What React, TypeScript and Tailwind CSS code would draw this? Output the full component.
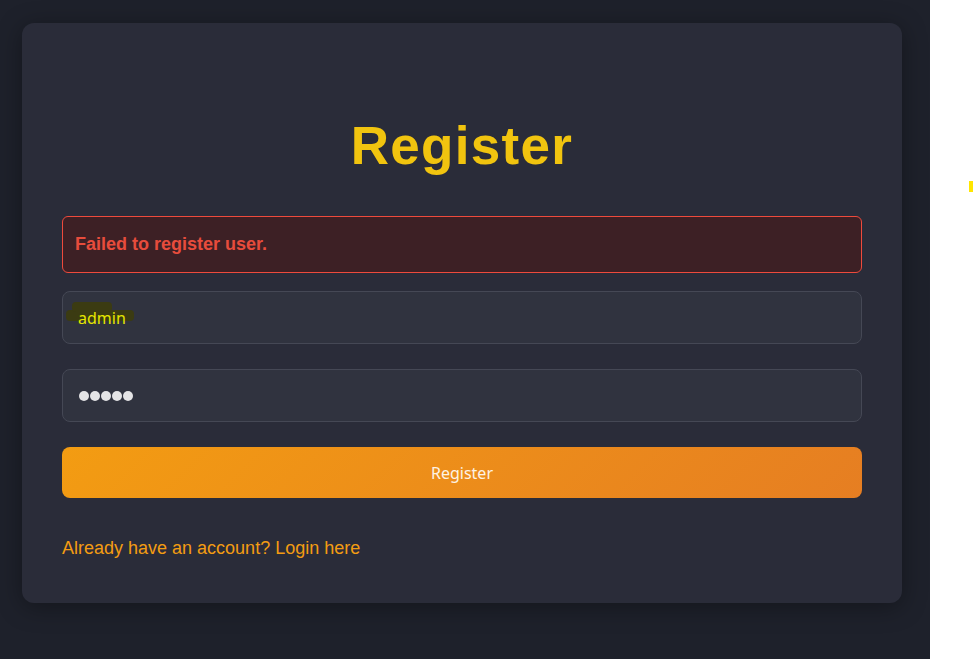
import React from 'react';

export default function App() {
  return (
    <div className="flex min-h-[659px] w-full">
      <div className="w-[930px] shrink-0 bg-[#1e212b] pl-[22px] pt-[23px] pb-[56px]">
        <div className="w-[880px] rounded-xl bg-[#2a2c39] px-10 pt-10 pb-[44px] shadow-[0_4px_24px_rgba(0,0,0,0.35)]">
          <h1
            className="mt-[52px] mb-[40px] text-center text-[53px] font-bold leading-[61px] tracking-[1.3px] text-[#f1c40f]"
            style={{ fontFamily: '"Liberation Sans", Arial, sans-serif' }}
          >
            Register
          </h1>

          <div
            className="flex h-[57px] items-center rounded-md border border-[#ee4a3c] bg-[#3d2025] px-3 text-[18px] font-bold text-[#e74c3c]"
            style={{ fontFamily: '"Liberation Sans", Arial, sans-serif' }}
          >
            Failed to register user.
          </div>

          <div
            className="mt-[18px] flex flex-col gap-[25px]"
            style={{ fontFamily: '"Noto Sans", sans-serif' }}
          >
            <div className="flex h-[53px] items-center rounded-lg border border-[#454855] bg-[#30333f] px-[15px] text-base">
              <span className="relative text-[#e5e600]">
                <span className="absolute -left-[12px] top-[4px] h-[11px] w-[68px] rounded-sm bg-[#3b3b12]" />
                <span className="absolute -left-[6px] -top-[4px] h-[10px] w-[40px] rounded-sm bg-[#3b3b12]" />
                <span className="relative">admin</span>
              </span>
            </div>

            <div className="flex h-[53px] items-center rounded-lg border border-[#454855] bg-[#30333f] px-4">
              <div className="flex gap-[1px]">
                {[0, 1, 2, 3, 4].map((i) => (
                  <span key={i} className="h-[10px] w-[10px] rounded-full bg-[#e4e4e6]" />
                ))}
              </div>
            </div>

            <button className="flex h-[51px] w-full items-center justify-center rounded-lg bg-[linear-gradient(135deg,#f39c12,#e67e22)] text-base text-[#fdf3e4]">
              Register
            </button>
          </div>

          <p
            className="mt-[40px] text-[18px] leading-[21px] text-[#f39c12]"
            style={{ fontFamily: '"Liberation Sans", Arial, sans-serif' }}
          >
            Already have an account? Login here
          </p>
        </div>
      </div>
      <div className="relative flex-1 bg-white">
        <span className="absolute left-[39px] top-[181px] h-[11px] w-[4px] bg-[#ffe600]" />
      </div>
    </div>
  );
}
